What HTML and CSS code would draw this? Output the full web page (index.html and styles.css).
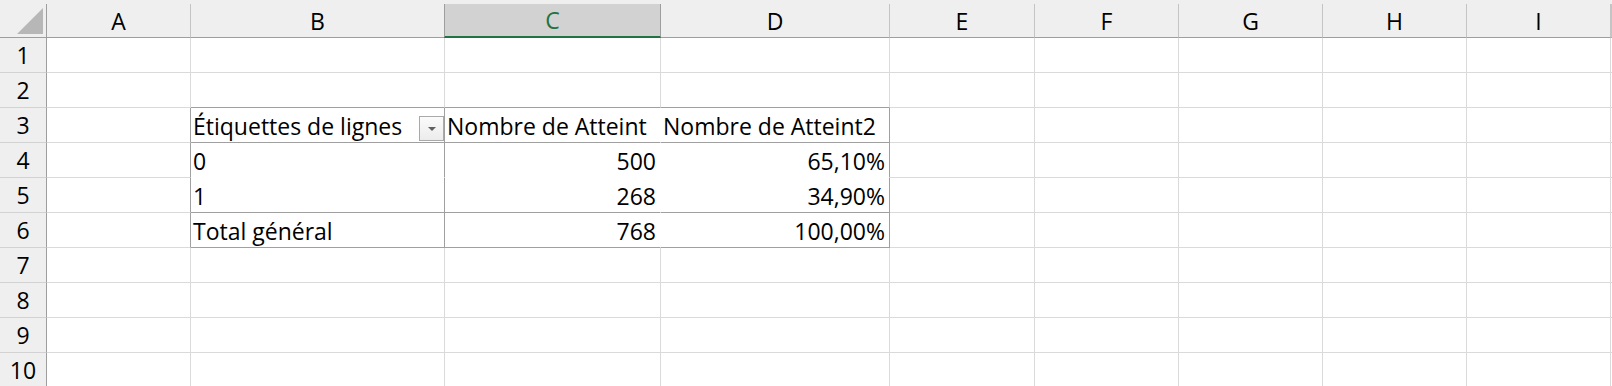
FILE: index.html
```
<!DOCTYPE html>
<html lang="fr">
<head>
<meta charset="utf-8">
<title>Feuil1</title>
<link rel="stylesheet" href="styles.css">
</head>
<body>
<div class="sheet">
  <div class="row head">
    <div class="corner"><svg class="corner-tri" width="26" height="26" viewBox="0 0 26 26"><polygon points="26,0 26,26 0,26" fill="#b7b7b7"/></svg></div>
    <div class="ch">A</div>
    <div class="ch">B</div>
    <div class="ch sel">C</div>
    <div class="ch">D</div>
    <div class="ch">E</div>
    <div class="ch">F</div>
    <div class="ch">G</div>
    <div class="ch">H</div>
    <div class="ch">I</div>
    <div class="ch"></div>
  </div>
  <div class="row">
    <div class="rh">1</div>
    <div class="c"></div><div class="c"></div><div class="c"></div><div class="c"></div><div class="c"></div><div class="c"></div><div class="c"></div><div class="c"></div><div class="c"></div><div class="c"></div>
  </div>
  <div class="row">
    <div class="rh">2</div>
    <div class="c"></div><div class="c pb"></div><div class="c pb"></div><div class="c pb"></div><div class="c"></div><div class="c"></div><div class="c"></div><div class="c"></div><div class="c"></div><div class="c"></div>
  </div>
  <div class="row">
    <div class="rh">3</div>
    <div class="c pr"></div>
    <div class="c pr pb filter-cell">Étiquettes de lignes<span class="filter-btn"><span class="filter-arrow"></span></span></div>
    <div class="c nr pb">Nombre de Atteint</div>
    <div class="c pr pb">Nombre de Atteint2</div>
    <div class="c"></div><div class="c"></div><div class="c"></div><div class="c"></div><div class="c"></div><div class="c"></div>
  </div>
  <div class="row">
    <div class="rh">4</div>
    <div class="c pr"></div>
    <div class="c pr nb">0</div>
    <div class="c nr nb num">500</div>
    <div class="c pr nb num">65,10%</div>
    <div class="c"></div><div class="c"></div><div class="c"></div><div class="c"></div><div class="c"></div><div class="c"></div>
  </div>
  <div class="row">
    <div class="rh">5</div>
    <div class="c pr"></div>
    <div class="c pr pb">1</div>
    <div class="c nr pb num">268</div>
    <div class="c pr pb num">34,90%</div>
    <div class="c"></div><div class="c"></div><div class="c"></div><div class="c"></div><div class="c"></div><div class="c"></div>
  </div>
  <div class="row">
    <div class="rh">6</div>
    <div class="c pr"></div>
    <div class="c pr pb">Total général</div>
    <div class="c nr pb num">768</div>
    <div class="c pr pb num">100,00%</div>
    <div class="c"></div><div class="c"></div><div class="c"></div><div class="c"></div><div class="c"></div><div class="c"></div>
  </div>
  <div class="row">
    <div class="rh">7</div>
    <div class="c"></div><div class="c"></div><div class="c"></div><div class="c"></div><div class="c"></div><div class="c"></div><div class="c"></div><div class="c"></div><div class="c"></div><div class="c"></div>
  </div>
  <div class="row">
    <div class="rh">8</div>
    <div class="c"></div><div class="c"></div><div class="c"></div><div class="c"></div><div class="c"></div><div class="c"></div><div class="c"></div><div class="c"></div><div class="c"></div><div class="c"></div>
  </div>
  <div class="row">
    <div class="rh">9</div>
    <div class="c"></div><div class="c"></div><div class="c"></div><div class="c"></div><div class="c"></div><div class="c"></div><div class="c"></div><div class="c"></div><div class="c"></div><div class="c"></div>
  </div>
  <div class="row">
    <div class="rh">10</div>
    <div class="c"></div><div class="c"></div><div class="c"></div><div class="c"></div><div class="c"></div><div class="c"></div><div class="c"></div><div class="c"></div><div class="c"></div><div class="c"></div>
  </div>
</div>
</body>
</html>
```
FILE: styles.css
```
html, body {
  margin: 0;
  padding: 0;
  background: #ffffff;
}

.sheet {
  width: 1612px;
  height: 386px;
  overflow: hidden;
  background: #efefef;
  padding-top: 4px;
  box-sizing: border-box;
  font-family: "Open Sans", "Liberation Sans", sans-serif;
  font-size: 23px;
  color: #000;
}

.row {
  display: grid;
  grid-template-columns: 47px 144px 254px 216px 229px 145px 144px 144px 144px 144px 1fr;
  height: 35px;
}

.row.head {
  height: 34px;
}

.corner,
.ch,
.rh,
.c {
  box-sizing: border-box;
  display: flex;
  white-space: nowrap;
  line-height: normal;
}

.corner {
  background: #efefef;
  border-right: 1px solid #9e9e9e;
  border-bottom: 1px solid #9e9e9e;
  padding: 4px 0 0 17px;
}

.corner-tri {
  display: block;
}

.ch {
  background: #efefef;
  border-right: 1px solid #c4c4c4;
  border-bottom: 1px solid #9e9e9e;
  align-items: center;
  justify-content: center;
}

.ch.sel {
  background: #d2d2d2;
  color: #217346;
  border-bottom: 2px solid #217346;
  border-right-color: #9e9e9e;
  border-left: 1px solid #9e9e9e;
  margin-left: -1px;
}

.rh {
  background: #efefef;
  border-right: 1px solid #9e9e9e;
  border-bottom: 1px solid #d2d2d2;
  align-items: center;
  justify-content: center;
}

.c {
  background: #ffffff;
  border-right: 1px solid #dadada;
  border-bottom: 1px solid #dadada;
  align-items: flex-end;
  padding: 0 4px 0 2px;
  position: relative;
}

.c.num {
  justify-content: flex-end;
}

.c.pr {
  border-right-color: #a0a0a0;
}

.c.pb {
  border-bottom-color: #a0a0a0;
}

.c.nr {
  border-right-color: #ffffff;
}

.c.nb {
  border-bottom-color: #ffffff;
}

.filter-btn {
  position: absolute;
  top: 8px;
  right: 0;
  width: 25px;
  height: 25px;
  box-sizing: border-box;
  border: 1px solid #a9a9a9;
  background: linear-gradient(#fbfbfb, #ececec);
  display: flex;
  align-items: center;
  justify-content: center;
}

.filter-arrow {
  width: 0;
  height: 0;
  border-left: 4px solid transparent;
  border-right: 4px solid transparent;
  border-top: 4px solid #606060;
}
```
